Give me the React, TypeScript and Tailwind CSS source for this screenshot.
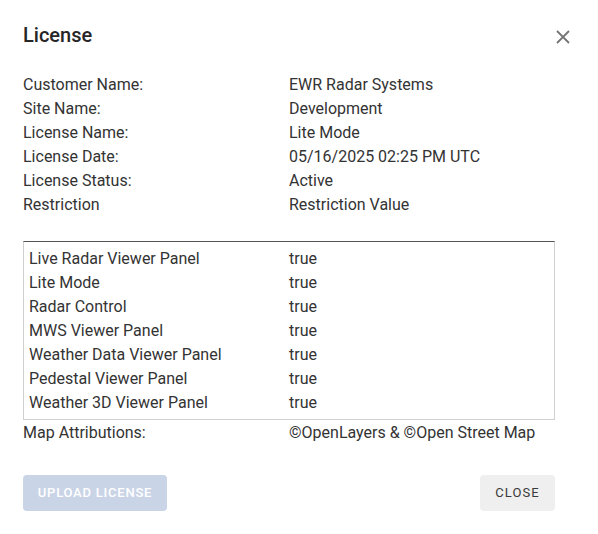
import React from "react";

const info: [string, string][] = [
  ["Customer Name:", "EWR Radar Systems"],
  ["Site Name:", "Development"],
  ["License Name:", "Lite Mode"],
  ["License Date:", "05/16/2025 02:25 PM UTC"],
  ["License Status:", "Active"],
  ["Restriction", "Restriction Value"],
];

const features: [string, string][] = [
  ["Live Radar Viewer Panel", "true"],
  ["Lite Mode", "true"],
  ["Radar Control", "true"],
  ["MWS Viewer Panel", "true"],
  ["Weather Data Viewer Panel", "true"],
  ["Pedestal Viewer Panel", "true"],
  ["Weather 3D Viewer Panel", "true"],
];

export default function App() {
  return (
    <div
      className="w-[598px] h-[534px] bg-white text-[#333333]"
      style={{ fontFamily: "Roboto, 'Liberation Sans', sans-serif" }}
    >
      <div className="flex items-center justify-between pl-[23px] pr-[27px] pt-[22px] h-[48px]">
        <h2 className="text-[20px] font-medium leading-[24px] text-[#262626]">License</h2>
        <svg width="16" height="16" viewBox="0 0 16 16" className="mt-[3px]">
          <path d="M2 2 L14 14 M14 2 L2 14" stroke="#757575" strokeWidth="1.8" />
        </svg>
      </div>
      <div className="px-[23px] pt-[25px] w-[555px] box-content">
        <div className="flex flex-col">
          {info.map(([k, v]) => (
            <div key={k} className="flex text-[16px] leading-[24px]">
              <span className="w-[266px] shrink-0">{k}</span>
              <span>{v}</span>
            </div>
          ))}
        </div>
        <div className="mt-[24px] w-[532px] border border-[#d0d0d0] border-t-[#555555] pl-[5px] pt-[5px] pb-[4px]">
          {features.map(([k, v]) => (
            <div key={k} className="flex text-[16px] leading-[24px]">
              <span className="w-[260px] shrink-0">{k}</span>
              <span>{v}</span>
            </div>
          ))}
        </div>
        <div className="flex text-[16px] leading-[24px] pt-[1px]">
          <span className="w-[266px] shrink-0">Map Attributions:</span>
          <span>©OpenLayers &amp; ©Open Street Map</span>
        </div>
        <div className="flex justify-between mt-[30px] w-[532px]">
          <button className="h-[36px] w-[144px] rounded-[4px] bg-[#cad4e7] text-white text-[13px] font-medium tracking-[0.06em] uppercase">
            Upload License
          </button>
          <button className="h-[36px] w-[75px] rounded-[4px] bg-[#efefef] text-[#3a3a3a] text-[13px] tracking-[0.08em] uppercase">
            Close
          </button>
        </div>
      </div>
    </div>
  );
}
